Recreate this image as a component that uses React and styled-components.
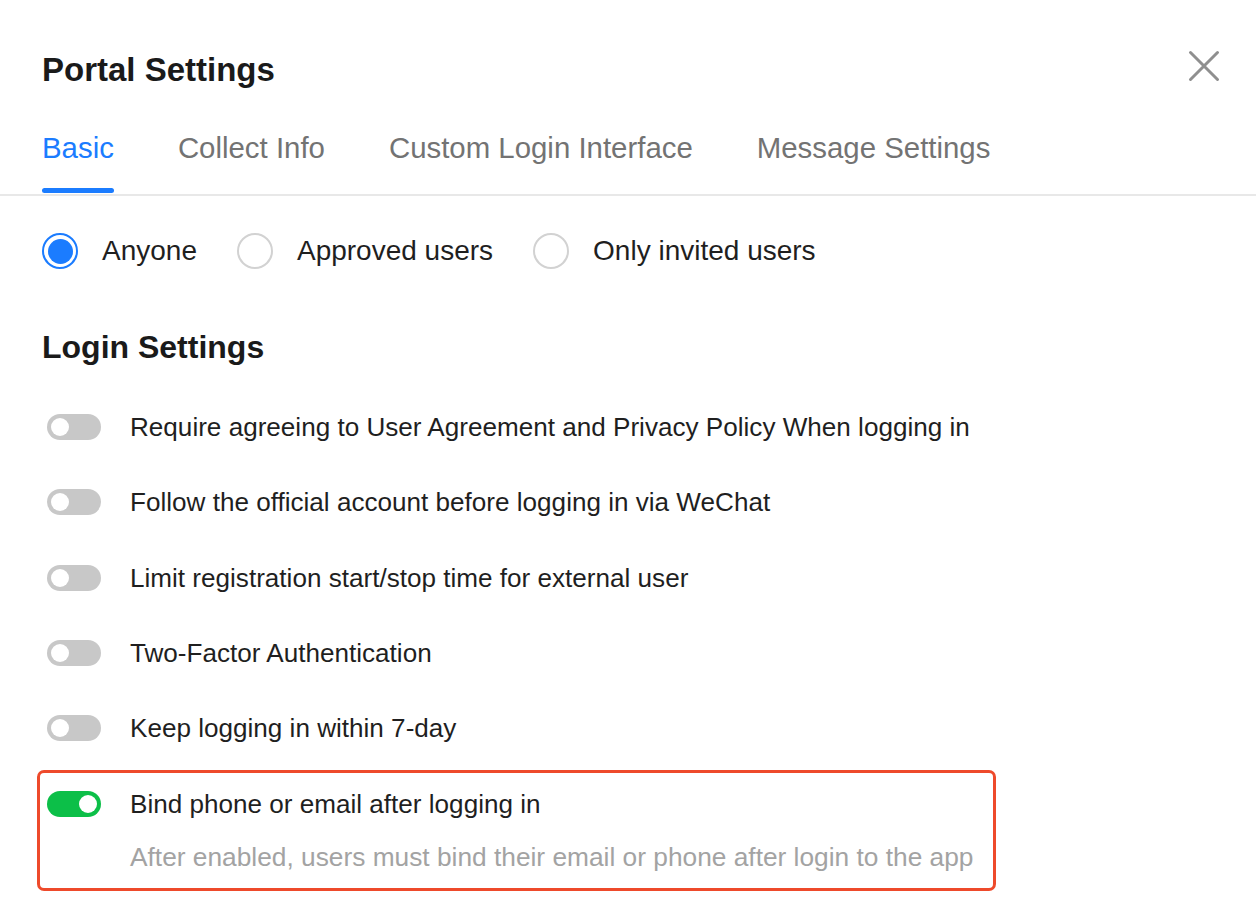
import React, { useState } from 'react';
import styled, { createGlobalStyle } from 'styled-components';

const GlobalStyle = createGlobalStyle`
  html, body {
    margin: 0;
    padding: 0;
    background: #ffffff;
  }
  body {
    font-family: "Liberation Sans", Arial, Helvetica, sans-serif;
    color: #1f1f1f;
    -webkit-font-smoothing: antialiased;
  }
`;

const Panel = styled.div`
  width: 1256px;
  min-height: 914px;
  background: #fff;
`;

const Header = styled.div`
  display: flex;
  align-items: flex-start;
  justify-content: space-between;
  padding: 50px 32px 0 42px;
  height: 40px;
`;

const Title = styled.h1`
  margin: 0;
  font-size: 33px;
  line-height: 40px;
  font-weight: 700;
  color: #1a1a1a;
`;

const CloseButton = styled.button`
  width: 40px;
  height: 40px;
  margin-top: -4px;
  padding: 0;
  border: none;
  background: transparent;
  display: flex;
  align-items: center;
  justify-content: center;
  cursor: pointer;
  color: #8f8f8f;
`;

const TabBar = styled.div`
  display: flex;
  gap: 64px;
  padding: 0 42px;
  margin-top: 41px;
  border-bottom: 2px solid #e8e8e8;
`;

const Tab = styled.button`
  position: relative;
  padding: 0 0 29px;
  border: none;
  background: transparent;
  font-family: inherit;
  font-size: 29.4px;
  line-height: 34px;
  color: ${(p) => (p.$active ? '#1b7cff' : '#737373')};
  cursor: pointer;

  &::after {
    content: '';
    position: absolute;
    left: 0;
    right: 0;
    bottom: 1px;
    height: 5px;
    border-radius: 3px;
    background: ${(p) => (p.$active ? '#1b7cff' : 'transparent')};
  }
`;

const Body = styled.div`
  padding: 37px 42px 0;
`;

const RadioGroup = styled.div`
  display: flex;
  align-items: center;
  gap: 40px;
`;

const RadioOption = styled.label`
  display: flex;
  align-items: center;
  gap: 24px;
  font-size: 28px;
  line-height: 36px;
  color: #1f1f1f;
  cursor: pointer;
`;

const RadioCircle = styled.span`
  width: 36px;
  height: 36px;
  box-sizing: border-box;
  border-radius: 50%;
  border: 2px solid ${(p) => (p.$checked ? '#1b7cff' : '#d2d2d2')};
  display: flex;
  align-items: center;
  justify-content: center;

  &::before {
    content: '';
    width: 25px;
    height: 25px;
    border-radius: 50%;
    background: ${(p) => (p.$checked ? '#1b7cff' : 'transparent')};
  }
`;

const SectionTitle = styled.h2`
  margin: 58px 0 0;
  font-size: 32px;
  line-height: 40px;
  font-weight: 700;
  color: #1a1a1a;
`;

const ToggleList = styled.div`
  display: flex;
  flex-direction: column;
  gap: 39.25px;
  margin-top: 42px;
  padding-left: 5px;
`;

const Row = styled.div`
  display: flex;
  align-items: center;
  gap: 29px;
  font-size: 26.1px;
  line-height: 36px;
  color: #1f1f1f;
  white-space: nowrap;
`;

const Switch = styled.button`
  position: relative;
  flex: none;
  width: 54px;
  height: 26px;
  padding: 0;
  border: none;
  border-radius: 13px;
  background: ${(p) => (p.$on ? '#0cbf48' : '#c8c8c8')};
  cursor: pointer;

  &::after {
    content: '';
    position: absolute;
    top: 4px;
    left: ${(p) => (p.$on ? '32px' : '4px')};
    width: 18px;
    height: 18px;
    border-radius: 50%;
    background: #fff;
  }
`;

const Highlight = styled.div`
  width: 959px;
  box-sizing: border-box;
  margin: -15px 0 0 -10px;
  padding: 13px 0 13px 7px;
  border: 3px solid #ee4a2b;
  border-radius: 7px;
`;

const Hint = styled.div`
  margin: 17px 0 0 83px;
  font-size: 26.3px;
  line-height: 36px;
  color: #a3a3a3;
  white-space: nowrap;
`;

const tabs = ['Basic', 'Collect Info', 'Custom Login Interface', 'Message Settings'];
const audiences = ['Anyone', 'Approved users', 'Only invited users'];
const options = [
  'Require agreeing to User Agreement and Privacy Policy When logging in',
  'Follow the official account before logging in via WeChat',
  'Limit registration start/stop time for external user',
  'Two-Factor Authentication',
  'Keep logging in within 7-day',
];

export default function App() {
  const [tab, setTab] = useState(0);
  const [audience, setAudience] = useState(0);
  const [bind, setBind] = useState(true);

  return (
    <Panel>
      <GlobalStyle />
      <Header>
        <Title>Portal Settings</Title>
        <CloseButton aria-label="Close">
          <svg width="32" height="32" viewBox="0 0 32 32">
            <path d="M2.5 2.5 L29.5 29.5 M29.5 2.5 L2.5 29.5" stroke="currentColor" strokeWidth="3" strokeLinecap="round" />
          </svg>
        </CloseButton>
      </Header>

      <TabBar>
        {tabs.map((t, i) => (
          <Tab key={t} $active={i === tab} onClick={() => setTab(i)}>
            {t}
          </Tab>
        ))}
      </TabBar>

      <Body>
        <RadioGroup>
          {audiences.map((a, i) => (
            <RadioOption key={a} onClick={() => setAudience(i)}>
              <RadioCircle $checked={i === audience} />
              {a}
            </RadioOption>
          ))}
        </RadioGroup>

        <SectionTitle>Login Settings</SectionTitle>

        <ToggleList>
          {options.map((o) => (
            <Row key={o}>
              <Switch $on={false} />
              {o}
            </Row>
          ))}
          <Highlight>
            <Row>
              <Switch $on={bind} onClick={() => setBind(!bind)} />
              Bind phone or email after logging in
            </Row>
            <Hint>After enabled, users must bind their email or phone after login to the app</Hint>
          </Highlight>
        </ToggleList>
      </Body>
    </Panel>
  );
}
